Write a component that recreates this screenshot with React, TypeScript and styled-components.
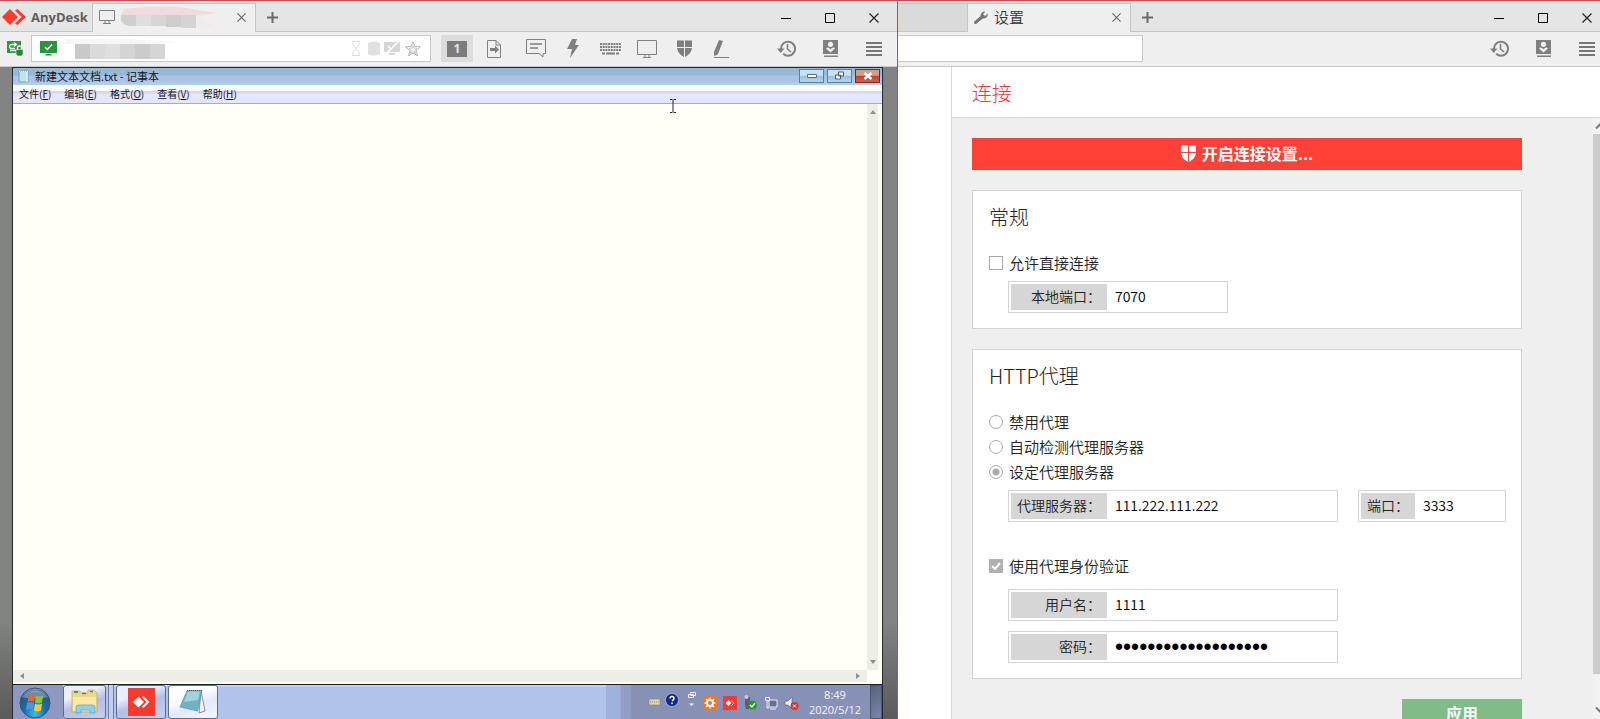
import React, { useState } from "react";
import styled, { createGlobalStyle, css } from "styled-components";

const UI_FONT = '"Noto Sans CJK SC", "Noto Sans", sans-serif';

const GlobalStyle = createGlobalStyle`
  *, *::before, *::after { box-sizing: border-box; }
  body { margin: 0; background: #efefef; font-family: ${UI_FONT}; color: #222; }
  button, input, textarea { font: inherit; color: inherit; margin: 0; }
  svg { display: block; flex: none; }
`;

/* ---------- Window frame ---------- */

const Screen = styled.main`
  display: grid;
  grid-template-columns: 898fr 702fr;
  height: 100vh;
  overflow: hidden;
  border-top: 1px solid #d04a4a;
`;

const Window = styled.section<{ $divided?: boolean }>`
  display: flex;
  flex-direction: column;
  min-width: 0;
  min-height: 0;
  background: #efefef;
  ${(p) => p.$divided && css`border-right: 1px solid #e03c3c;`}
`;

const TitleBar = styled.header<{ $end: number }>`
  display: flex;
  flex: none;
  height: 31px;
  padding: 2px ${(p) => p.$end}px 0 0;
  background: #e5e5e5;
  box-shadow: inset 0 -1px #c4c4c4;
`;

const Brand = styled.div`
  display: flex;
  align-items: center;
  gap: 5px;
  width: 92px;
  padding: 0 0 2px 2px;
  font: 700 13px/26px "Open Sans", sans-serif;
  color: #5e5e5e;
`;

const Tab = styled.div`
  display: flex;
  align-items: center;
  gap: 6px;
  width: 164px;
  padding: 0 5px 2px 6px;
  background: #efefef;
  border: 1px solid #c4c4c4;
  border-bottom: 0;
  font-size: 15px;
  font-weight: 350;
  line-height: 24px;
  color: #333;
`;

const HiddenTab = styled.div`
  width: 69px;
  background: #dadada;
  border: 1px solid #c4c4c4;
  border-width: 1px 0;
`;

const TabLabel = styled.span`
  flex: 1;
`;

const IconButton = styled.button<{ $width: number }>`
  display: flex;
  align-items: center;
  justify-content: center;
  flex: none;
  width: ${(p) => p.$width}px;
  padding: 0;
  border: 0;
  background: transparent;
`;

const Spacer = styled.div`
  flex: 1;
`;

const ButtonSet = styled.div`
  display: flex;
  gap: 18px;
`;

const ToolBar = styled.div<{ $start: number; $end: number }>`
  display: flex;
  align-items: stretch;
  flex: none;
  height: 35px;
  padding: 3px ${(p) => p.$end}px 4px ${(p) => p.$start}px;
  border-bottom: 1px solid #c8c8c8;
`;

const AddressBox = styled.div<{ $width: number; $open?: boolean }>`
  display: flex;
  align-items: center;
  gap: 5px;
  width: ${(p) => p.$width}px;
  padding: 0 9px 0 8px;
  background: #fff;
  border: 1px solid #c8c8c8;
  ${(p) => p.$open && css`border-left: 0;`}
`;

const AddressInput = styled.input`
  width: 100%;
  border: 0;
  outline: 0;
  background: transparent;
`;

const Tools = styled.div`
  display: flex;
  gap: 5px;
  padding-left: 10px;
`;

const ToolButton = styled(IconButton)<{ $active?: boolean; $after?: boolean }>`
  background: ${(p) => (p.$active ? "#dcdcdc" : "transparent")};
  margin-right: ${(p) => (p.$after ? 5 : 0)}px;
`;

const DisplayNumber = styled.span`
  width: 20px;
  height: 16px;
  background: #7c7c7c;
  color: #e4e4e4;
  font: 700 12px/16px "Open Sans", sans-serif;
`;

/* ---------- Remote desktop ---------- */

const Stage = styled.div`
  flex: 1;
  display: flex;
  min-height: 0;
  padding: 0 14px 0 12px;
  background: linear-gradient(#828282 0 85%, #5a5a5a 100%);
`;

const Desktop = styled.div`
  flex: 1;
  display: flex;
  flex-direction: column;
  min-width: 0;
  border: 1px solid #1e2c3a;
  border-bottom: 0;
  position: relative;
`;

const NotepadTitle = styled.div`
  display: flex;
  align-items: center;
  flex: none;
  gap: 3px;
  height: 17px;
  padding: 0 2px 1px 4px;
  background: linear-gradient(#98b9d6 0 40%, #abc4e6 50% 75%, #aed3e8);
  line-height: 16px;
  color: #10141c;
`;

const NotepadHeading = styled.h1`
  flex: 1;
  margin: 0 0 0 3px;
  font-size: 11px;
  font-weight: 400;
`;

const CaptionButton = styled.button<{ $close?: boolean }>`
  display: flex;
  align-items: center;
  justify-content: center;
  width: 25px;
  height: 14px;
  padding: 0;
  border: 1px solid ${(p) => (p.$close ? "#6e2c2c" : "#5c7ea4")};
  background: ${(p) =>
    p.$close
      ? "linear-gradient(#d99a8c 0 45%, #c23e2c 50%, #d0604c)"
      : "linear-gradient(#c8e0f2 0 45%, #98bfe0 50%, #b4d6ee)"};
`;

const MenuBar = styled.nav`
  display: flex;
  flex: none;
  gap: 13px;
  height: 19px;
  padding: 0 0 1px 6px;
  background: linear-gradient(#fdfdff 0 30%, #d4d6f2 35% 45%, #e6e6fb 50%);
  border-bottom: 1px solid #9fadc8;
`;

const MenuItem = styled.button`
  padding: 0;
  border: 0;
  background: transparent;
  font-size: 10px;
  line-height: 16px;
  color: #14141c;
`;

const Editor = styled.div`
  flex: 1;
  display: grid;
  grid-template: minmax(0, 1fr) 12px / minmax(0, 1fr) 11px;
  min-height: 0;
  padding: 0 4px 2px 0;
  background: #fffff6;
  border-bottom: 1px solid #17202c;
`;

const NotepadText = styled.textarea`
  width: 100%;
  height: 100%;
  padding: 4px;
  border: 0;
  outline: 0;
  resize: none;
  background: #fffff6;
`;

const NotepadScroll = styled.div<{ $vertical?: boolean }>`
  display: flex;
  flex-direction: ${(p) => (p.$vertical ? "column" : "row")};
  align-items: center;
  justify-content: space-between;
  padding: ${(p) => (p.$vertical ? "5px 0" : "0 6px")};
  background: #eeefe4;
`;

const TextCursor = styled.svg`
  position: absolute;
  left: 656px;
  top: 31px;
`;

const TaskBar = styled.footer`
  display: flex;
  flex: none;
  height: 34px;
  background: linear-gradient(#ffffff55, transparent 3px), #b1c3ec;
`;

const StartButton = styled.button`
  width: 50px;
  padding: 1px 0 0 6px;
  border: 0;
  background: #8d99c0;
`;

const TaskButton = styled.button<{ $width: number; $light?: boolean }>`
  display: flex;
  align-items: center;
  justify-content: center;
  width: ${(p) => p.$width}px;
  margin-right: 2px;
  padding: 0;
  border: 1px solid #5c6c90;
  border-radius: 3px;
  background: ${(p) =>
    p.$light
      ? "linear-gradient(160deg, #ffffff 0 35%, #e2e8f8 60%, #f4f7fd)"
      : "linear-gradient(160deg, #eceefa 0 30%, #b4bee2 55%, #c6d0ee)"};
`;

const TaskDivider = styled.div`
  width: 6px;
  margin-right: 2px;
  border: 1px solid #6f7fa6;
  border-width: 0 1px;
  background: #c4cdec;
`;

const Tray = styled.div`
  display: flex;
  align-items: center;
  gap: 4px;
  padding-left: 42px;
  background: linear-gradient(90deg, #a0b2dc 0 14px, #929ec6 15px 24px, #8791b5 26px);
`;

const Clock = styled.time`
  width: 62px;
  padding-bottom: 1px;
  font: 11px/15px "Open Sans", sans-serif;
  text-align: center;
  color: #f4f6fc;
`;

const ShowDesktop = styled.button`
  align-self: stretch;
  width: 12px;
  padding: 0;
  border: 1px solid #4c5474;
  background: linear-gradient(135deg, #56607e, #7c86ac);
`;

/* ---------- Settings ---------- */

const SettingsBody = styled.div`
  flex: 1;
  display: flex;
  min-height: 0;
`;

const Sidebar = styled.aside`
  flex: none;
  width: 54px;
  background: #fff;
  border-right: 1px solid #d6d6d6;
`;

const Settings = styled.div`
  flex: 1;
  display: flex;
  flex-direction: column;
  min-width: 0;
`;

const PageTitle = styled.h2`
  flex: none;
  margin: 0;
  padding: 0 20px;
  height: 51px;
  background: #fff;
  border-bottom: 1px solid #d6d6d6;
  font-size: 20px;
  font-weight: 300;
  line-height: 52px;
  color: #e23b3b;
`;

const ScrollArea = styled.div`
  flex: 1;
  display: flex;
  justify-content: space-between;
  min-height: 0;
  overflow: hidden;
`;

const Form = styled.form`
  flex: 1;
  display: flex;
  flex-direction: column;
  gap: 20px;
  max-width: 590px;
  padding: 20px;
`;

const Unlock = styled.button`
  display: flex;
  align-items: center;
  justify-content: center;
  gap: 6px;
  flex: none;
  height: 32px;
  padding: 0 0 1px;
  border: 0;
  background: #ff4137;
  color: #fff;
  font-size: 16px;
  font-weight: 700;
  line-height: 28px;
`;

const UnlockText = styled.span`
  padding-bottom: 1px;
`;

const Card = styled.section`
  flex: none;
  padding: 10px 15px 15px 16px;
  background: #fff;
  border: 1px solid #d4d4d4;
`;

const CardTitle = styled.h3`
  margin: 0 0 18px;
  font-size: 20px;
  font-weight: 300;
  line-height: 32px;
  color: #222;
`;

const Option = styled.label`
  display: flex;
  align-items: center;
  gap: 6px;
  height: 25px;
  padding-bottom: 1px;
  font-size: 15px;
  font-weight: 350;
  line-height: 24px;
`;

const Mark = styled.input`
  appearance: none;
  flex: none;
  width: 14px;
  height: 14px;
  border: 1px solid #a8a8a8;
  background: #fff center / 100% no-repeat;

  &[type="radio"] { border-radius: 50%; }
  &[type="radio"]:checked { background: radial-gradient(circle, #acacac 0 3px, #fff 4px); }
  &[type="checkbox"]:checked {
    border-color: #b0b0b0;
    background-color: #b0b0b0;
    background-image: url('data:image/svg+xml,<svg xmlns="http://www.w3.org/2000/svg" viewBox="0 0 12 12"><path d="M2 6l3 3 5-6" fill="none" stroke="white" stroke-width="2"/></svg>');
  }
`;

const Row = styled.div<{ $top: number }>`
  display: flex;
  gap: 20px;
  margin-top: ${(p) => p.$top}px;
  padding-left: 19px;
`;

const FieldBox = styled.div<{ $width: number }>`
  display: flex;
  width: ${(p) => p.$width}px;
  height: 32px;
  padding: 2px;
  border: 1px solid #d4d4d4;
`;

const FieldLabel = styled.label<{ $width: number }>`
  flex: none;
  width: ${(p) => p.$width}px;
  padding-right: 6px;
  background: #d6d6d6;
  font-size: 14px;
  font-weight: 350;
  line-height: 24px;
  text-align: right;
`;

const FieldInput = styled.input`
  flex: 1;
  min-width: 0;
  padding: 0 8px 2px;
  border: 0;
  outline: 0;
  font-size: 14px;
  font-weight: 350;
  color: #000;

  &[type="password"] { padding-bottom: 0; font: 23px/26px "Liberation Sans", sans-serif; }
`;

const AuthGroup = styled.div`
  margin-top: 32px;
`;

const Apply = styled.button`
  align-self: flex-end;
  flex: none;
  width: 120px;
  height: 32px;
  padding: 0 0 4px;
  border: 0;
  background: #80bb88;
  color: #fff;
  font-size: 16px;
  font-weight: 700;
  line-height: 28px;
`;

const ScrollTrack = styled.div`
  display: flex;
  flex-direction: column;
  flex: none;
  width: 7px;
  overflow: hidden;
  background: #f2f2f2;
`;

const ScrollArrow = styled.div<{ $up?: boolean }>`
  flex: none;
  height: ${(p) => (p.$up ? 16 : 45)}px;
  padding-top: ${(p) => (p.$up ? 4 : 33)}px;
  padding-left: 2px;
`;

const ScrollThumb = styled.div`
  flex: 1;
  background: #cbcbcb;
`;

/* ---------- Drawings ---------- */

const g = "#7f7f7f";

const Logo = () => (
  <svg width="24" height="16" viewBox="0 0 24 16" fill="#ff3b30">
    <path d="M8 0l8 8-8 8-8-8z" />
    <path d="M13 1.500L15.500 0 24 8l-8.500 8L13 14.500 19.500 8z" />
  </svg>
);

const Monitor = ({ w, h }: { w: number; h: number }) => (
  <svg width={w} height={h} viewBox={`0 0 ${w} ${h}`} fill="none" stroke={g}>
    <path d={`M.5.5h${w - 1}v${h - 4}h-${w - 1}zM${w / 2 - 4} ${h - 0.5}h8M${w / 2 - 2} ${h - 3}v2M${w / 2 + 2} ${h - 3}v2`} />
  </svg>
);

const Cross = ({ s, color = "#666" }: { s: number; color?: string }) => (
  <svg width={s} height={s} viewBox="0 0 10 10" stroke={color} strokeWidth="1.200">
    <path d="M.5.5l9 9M9.500.5l-9 9" />
  </svg>
);

const Plus = () => (
  <svg width="11" height="11" viewBox="0 0 11 11" stroke="#6a6a6a" strokeWidth="2">
    <path d="M5.500 0v11M0 5.500h11" />
  </svg>
);

const Minimize = () => (
  <svg width="10" height="10" viewBox="0 0 10 10"><path d="M0 5h10v1H0z" fill="#000" /></svg>
);
const Maximize = () => (
  <svg width="10" height="10" viewBox="0 0 10 10"><path d="M.5.5h9v9h-9z" fill="none" stroke="#000" /></svg>
);

const Shield = ({ color = g }) => (
  <svg width="15" height="17" viewBox="0 0 15 17" fill={color}>
    <path d="M0 .5h7V7H0zM8 .5h7V7H8zM0 8h7v9C3 15 .5 12 0 8zM8 8h7c-.5 4-3 7-7 9z" />
  </svg>
);

const History = () => (
  <svg width="19" height="17" viewBox="0 0 19 17" fill="none" stroke={g} strokeWidth="2">
    <path d="M4 9a7 7 0 1 1 2.200 4.800" />
    <path d="M0 8.500h7.500L3.700 13z" fill={g} stroke="none" />
    <path d="M10.500 4v5l3.500 3" strokeWidth="1.600" />
  </svg>
);

const Contacts = () => (
  <svg width="15" height="17" viewBox="0 0 15 17">
    <path d="M0 0h15v14H0zM1 15.500h14V17H1z" fill={g} />
    <circle cx="7.500" cy="4.300" r="2.600" fill="#efefef" />
    <path d="M3 8.500q1.500-1.500 3-.5l1.500 1.300L9 8q1.500-1 3 .5L7.500 12.500z" fill="#efefef" />
  </svg>
);

const Menu = () => (
  <svg width="16" height="14" viewBox="0 0 16 14" fill="#777">
    <path d="M0 0h16v2H0zM0 4h16v2H0zM0 8h16v2H0zM0 12h16v2H0z" />
  </svg>
);

const SecureLink = () => (
  <svg width="16" height="15" viewBox="0 0 16 15">
    <path d="M0 0h14v12H0z" fill="#2f9540" />
    <path d="M9 3.500H4.500a2 2 0 0 0 0 4H8M7 1.500l2.500 2L7 5.500M9 9.500H3" fill="none" stroke="#eef6ee" strokeWidth="1.300" />
    <path d="M9 8.500h7V13l-1.500 2h-4L9 13z" fill="#23872f" stroke="#efefef" strokeWidth=".6" />
    <path d="M10.500 8.500V7a2 2 0 0 1 4 0v1.500" fill="none" stroke="#efefef" strokeWidth="1.400" />
  </svg>
);

const Verified = () => (
  <svg width="17" height="15" viewBox="0 0 17 15">
    <path d="M0 0h17v12H0zM6 13h5l1 1.500H5z" fill="#2a9438" />
    <path d="M5 6l2.500 2.500L12 3.500" fill="none" stroke="#fff" strokeWidth="1.500" />
  </svg>
);

const TabMosaic = () => (
  <svg width="96" height="24" viewBox="0 0 96 24">
    <path d="M4 5Q30 0 60 3L96 9 78 10 96 24 75 21z" fill="#f1ebeb" />
    <path d="M3 4Q40 0 65 3L96 8 75 10H0z" fill="#f1dada" />
    <path d="M0 10h15v11H9Q1 20 0 15z" fill="#cfcfcf" />
    <path d="M15 10h15v11H15z" fill="#dedede" />
    <path d="M30 10h15v11H30z" fill="#d6d6d6" />
    <path d="M45 10h15v12H45z" fill="#cdcdcd" />
    <path d="M60 10h15v13H60z" fill="#d4d4d4" />
  </svg>
);

const AddressMosaic = () => (
  <svg width="114" height="22" viewBox="0 0 114 22">
    <path d="M3 1Q60-1 114 4L102 6H3z" fill="#f6f6f6" />
    <path d="M13 6h15v15H13z" fill="#c9c9c9" />
    <path d="M28 6h15v15H28z" fill="#dadada" />
    <path d="M43 6h15v15H43z" fill="#e0dfe0" />
    <path d="M58 6h15v15H58z" fill="#d4d4d4" />
    <path d="M73 6h15v15H73z" fill="#cbcbcb" />
    <path d="M88 6h15v15H88z" fill="#d5d5d5" />
  </svg>
);

const AddressIcons = () => (
  <svg width="70" height="16" viewBox="0 0 70 16">
    <path d="M1 .5h8M1 14.500h8M2 1v3l3 3.500L8 4V1M2 14v-3l3-3.500L8 11v3" fill="none" stroke="#dcdcdc" />
    <path d="M17 2q6-3 12 0v11q-6 3-12 0z" fill="#e0e0e0" />
    <path d="M33 1h16v10H33zM38 12h6v2h-6z" fill="#d6d6d6" />
    <path d="M35 13L47 1M37 5l3 3 5-5" stroke="#fff" fill="none" strokeWidth="1.500" />
    <path d="M62 .8l2 4.700 5.300.4-4 3.500 1.200 5.500-4.500-3-4.500 3 1.200-5.500-4-3.500 5.300-.4z" fill="none" stroke="#a0a0a0" strokeWidth=".8" />
    <path d="M62 4.500l1 2.500 3 .3-2.200 2 .7 3L62 10.800l-2.500 1.500.7-3-2.200-2 3-.3z" fill="none" stroke="#a8a8a8" strokeWidth=".7" />
  </svg>
);

const SendFile = () => (
  <svg width="14" height="18" viewBox="0 0 14 18" fill="none" stroke={g}>
    <path d="M.5.5H9L13.500 5v12.500H.5zM9 .5V5h4.500" />
    <path d="M3 8h5V5.500L12 9.500l-4 4V11H3z" fill={g} stroke="none" />
  </svg>
);

const Chat = () => (
  <svg width="20" height="19" viewBox="0 0 20 19" fill="none" stroke={g}>
    <path d="M.5.5h19v14H17v3.500l-4-3.500H.5z" />
    <path d="M4 5h12M4 9h8" strokeWidth="1.400" />
  </svg>
);

const Bolt = () => (
  <svg width="12" height="19" viewBox="0 0 12 19" fill={g}>
    <path d="M5 0h5L8 6h4L3 19l2-9H0z" />
  </svg>
);

const Keyboard = () => (
  <svg width="21" height="12" viewBox="0 0 21 12" stroke={g} strokeWidth="2">
    <path d="M0 1h21M0 4h21M0 7h21" strokeDasharray="2 .7" />
    <path d="M2 10.500h3m1 0h9m1 0h3" />
  </svg>
);

const Pen = () => (
  <svg width="16" height="18" viewBox="0 0 16 18" fill={g}>
    <path d="M6 0l4 1-5 13-3 2-1-.5L1 12zM1 17h15v1H1z" />
  </svg>
);

const Wrench = () => (
  <svg width="14" height="13" viewBox="0 0 14 13">
    <path d="M1.500 11.500L8 6" stroke="#757575" strokeWidth="3" strokeLinecap="round" />
    <path d="M7 6.500C5.500 3 8 0 11.500.5L9.300 2.700l.5 1.600 1.700.4L13.700 2.500C14.500 6 11 9 7 6.500z" fill="#757575" />
  </svg>
);

const Triangle = ({ d }: { d: string }) => (
  <svg width="6" height="6" viewBox="0 0 6 6"><path d={d} fill="#8a8f96" /></svg>
);

const NotepadIcon = () => (
  <svg width="12" height="13" viewBox="0 0 12 13">
    <path d="M2 1h9v11H2z" fill="#bfe3ea" stroke="#6fa3b4" />
    <path d="M10 2v10" stroke="#fff" /><path d="M2 1.500h9" stroke="#e8f4f6" strokeDasharray="1 1" />
  </svg>
);

const Orb = () => (
  <svg width="32" height="32" viewBox="0 0 32 32">
    <defs>
      <radialGradient id="orb" cx=".5" cy=".85" r=".9">
        <stop offset="0" stopColor="#38c4ee" /><stop offset=".4" stopColor="#176fb0" />
        <stop offset=".75" stopColor="#2d5680" /><stop offset="1" stopColor="#a9bdd0" />
      </radialGradient>
    </defs>
    <circle cx="16" cy="16" r="15" fill="url(#orb)" stroke="#3a5378" />
    <path d="M3 10Q16-3 29 10q-13 3-26 0z" fill="#fff" opacity=".3" />
    <path d="M10 8q3-2 6 0l-1 7q-3-2-6.500 0z" fill="#ec6430" />
    <path d="M17 8.500q3 2 7 0l-1 7q-4 2-7 0z" fill="#8cc63e" />
    <path d="M8 16q4-2 7 0l-1 7q-3-2-7 0z" fill="#3e9be0" />
    <path d="M16 16.500q3 2 7 0l-1 7q-4 2-7 0z" fill="#fccb38" />
  </svg>
);

const Folder = () => (
  <svg width="28" height="26" viewBox="0 0 28 26">
    <path d="M1 2h8l2 2h6V1h6l3 3v19H1z" fill="#ecd88c" stroke="#c4aa60" strokeWidth=".7" />
    <path d="M2 8h23v14H2z" fill="#f8eaa4" />
    <path d="M3 3h4" stroke="#4a9a4a" strokeWidth="2" /><path d="M11 4.500h4" stroke="#c05040" strokeWidth="1.500" /><path d="M19 2.500h3" stroke="#4a80c0" strokeWidth="1.500" />
    <path d="M5 18q0-2 3-2h13q3 0 3 2v6h-5v-3h-9v3H5z" fill="#8fd0ee" stroke="#5aa0cc" strokeWidth=".7" />
  </svg>
);

const NotepadLarge = () => (
  <svg width="28" height="26" viewBox="0 0 28 26">
    <path d="M22 2l4 20-6 2z" fill="#f4f4f4" stroke="#777" strokeWidth=".8" />
    <path d="M8 1.500h15L18.500 22 1 18z" fill="#6fb2c4" stroke="#50889a" strokeWidth=".6" />
    <path d="M9 2.500h12L19 11 5 13z" fill="#b8dfe8" opacity=".7" />
    <path d="M8 1.500h15" stroke="#555" strokeDasharray="1 1" />
  </svg>
);

const DeskTile = () => (
  <svg width="27" height="28" viewBox="0 0 27 28">
    <path d="M0 0h27v28H0z" fill="#f93a30" />
    <path d="M10.500 8.500L16 14l-5.500 5.500L5 14zM14 9.500l1.500-1.500 6 6-6 6-1.500-1.500 4.500-4.500z" fill="#fff" />
  </svg>
);

const TrayIcons = () => (
  <svg width="152" height="26" viewBox="0 0 152 26">
    <path d="M1 10h11v6H1z" fill="#d9d6b0" stroke="#8a8a78" strokeWidth=".6" /><path d="M2 13h9" stroke="#8a8a78" strokeDasharray="1 1" />
    <circle cx="24" cy="11" r="6.500" fill="#15268c" stroke="#cfd6ee" strokeWidth=".6" />
    <path d="M22 9.500q0-2 2-2t2 2q0 1-2 2.500M24 13.500v1.500" fill="none" stroke="#fff" strokeWidth="1.500" />
    <path d="M42.500 3.500h5v3h-5zM40.500 5.500h5v3h-5z" fill="#8791b5" stroke="#eef" />
    <path d="M41 14.500h5l-2.500 2.500z" fill="#fff" />
    <path d="M55 7h14v14H55z" fill="#f0762c" /><circle cx="62" cy="14" r="3" fill="none" stroke="#fff" strokeWidth="1.800" />
    <path d="M62 8.500v2M62 17.500v2M56.500 14h2M65.500 14h2M58 10l1.500 1.500M64.500 16.500L66 18M66 10l-1.500 1.500M59.500 16.500L58 18" stroke="#fff" strokeWidth="1.300" />
    <path d="M75 7h14v14H75z" fill="#f93a30" /><path d="M80.500 11l3 3-3 3-3-3z" fill="#fff" /><path d="M83.500 11.500L86 14l-2.500 2.500" fill="none" stroke="#fff" />
    <path d="M97 8h5v8l-1 4h-3l-1-4z" fill="#58606c" /><circle cx="98.500" cy="8" r="2" fill="#c8cce0" />
    <circle cx="104.500" cy="16" r="4.500" fill="#27962e" /><path d="M102 16l2 2 3-4" fill="none" stroke="#fff" strokeWidth="1.400" />
    <path d="M121 11h8v7h-8zM122 20h6" fill="#65708c" stroke="#eef" /><path d="M117.500 8.500h4v3h-4zM119 12v7h2" fill="none" stroke="#eef" />
    <path d="M137 12h3l4-4v12l-4-4h-3z" fill="#eef" stroke="#555" strokeWidth=".6" />
    <circle cx="146.500" cy="17" r="4" fill="#cf3a34" /><path d="M145 15.500l3 3M148 15.500l-3 3" stroke="#fff" />
  </svg>
);

/* ---------- Composed parts ---------- */

const WindowControls = () => (
  <ButtonSet>
    <IconButton $width={26} aria-label="最小化"><Minimize /></IconButton>
    <IconButton $width={26} aria-label="最大化"><Maximize /></IconButton>
    <IconButton $width={26} aria-label="关闭"><Cross s={10} color="#222" /></IconButton>
  </ButtonSet>
);

const GlobalTools = () => (
  <ButtonSet>
    <IconButton $width={26} aria-label="历史"><History /></IconButton>
    <IconButton $width={26} aria-label="联系人"><Contacts /></IconButton>
    <IconButton $width={26} aria-label="菜单"><Menu /></IconButton>
  </ButtonSet>
);

type FieldProps = {
  id: string;
  label: string;
  value: string;
  width: number;
  labelWidth?: number;
  type?: string;
};

const Field = ({ id, label, value, width, labelWidth = 96, type = "text" }: FieldProps) => (
  <FieldBox $width={width}>
    <FieldLabel htmlFor={id} $width={labelWidth}>{label}</FieldLabel>
    <FieldInput id={id} type={type} defaultValue={value} autoComplete="off" />
  </FieldBox>
);

const menus = [["文件", "F"], ["编辑", "E"], ["格式", "O"], ["查看", "V"], ["帮助", "H"]];
const proxyModes = ["禁用代理", "自动检测代理服务器", "设定代理服务器"];

const RemoteWindow = () => (
  <Window $divided>
    <TitleBar $end={10}>
      <Brand><Logo />AnyDesk</Brand>
      <Tab>
        <Monitor w={16} h={14} />
        <TabLabel><TabMosaic /></TabLabel>
        <IconButton $width={18} aria-label="关闭标签页"><Cross s={9} /></IconButton>
      </Tab>
      <IconButton $width={32} aria-label="新建标签页"><Plus /></IconButton>
      <Spacer />
      <WindowControls />
    </TitleBar>
    <ToolBar $start={7} $end={10}>
      <ButtonSetLead>
        <IconButton $width={16} aria-label="安全连接"><SecureLink /></IconButton>
        <AddressBox $width={400}>
          <Verified />
          <AddressMosaic />
          <Spacer />
          <AddressIcons />
        </AddressBox>
      </ButtonSetLead>
      <Tools>
        <ToolButton $width={32} $active aria-label="显示器 1"><DisplayNumber>1</DisplayNumber></ToolButton>
        <ToolButton $width={32} $after aria-label="传输文件"><SendFile /></ToolButton>
        <ToolButton $width={32} aria-label="聊天"><Chat /></ToolButton>
        <ToolButton $width={32} aria-label="操作"><Bolt /></ToolButton>
        <ToolButton $width={32} aria-label="键盘"><Keyboard /></ToolButton>
        <ToolButton $width={32} aria-label="显示"><Monitor w={20} h={18} /></ToolButton>
        <ToolButton $width={32} aria-label="权限"><Shield /></ToolButton>
        <ToolButton $width={32} aria-label="白板"><Pen /></ToolButton>
      </Tools>
      <Spacer />
      <GlobalTools />
    </ToolBar>
    <Stage>
      <Desktop>
        <NotepadTitle>
          <NotepadIcon />
          <NotepadHeading>新建文本文档.txt - 记事本</NotepadHeading>
          <CaptionButton aria-label="最小化">
            <svg width="10" height="6" viewBox="0 0 10 6"><path d="M.5 1.500h9v3h-9z" fill="#fff" stroke="#5a6a80" /></svg>
          </CaptionButton>
          <CaptionButton aria-label="还原">
            <svg width="11" height="10" viewBox="0 0 11 10"><path d="M4.500 1h5v4h-5zM1.500 4h5v4h-5z" fill="#fff" stroke="#4a5a78" /></svg>
          </CaptionButton>
          <CaptionButton $close aria-label="关闭">
            <svg width="10" height="8" viewBox="0 0 10 8"><path d="M1.500 1l7 6M8.500 1l-7 6" stroke="#fff" strokeWidth="2.400" /></svg>
          </CaptionButton>
        </NotepadTitle>
        <MenuBar>
          {menus.map(([name, key]) => (
            <MenuItem key={key}>{name}(<u>{key}</u>)</MenuItem>
          ))}
        </MenuBar>
        <Editor>
          <NotepadText aria-label="文本" />
          <NotepadScroll $vertical>
            <Triangle d="M0 5l3-4 3 4z" />
            <Triangle d="M0 1l3 4 3-4z" />
          </NotepadScroll>
          <NotepadScroll>
            <Triangle d="M5 0L1 3l4 3z" />
            <Triangle d="M1 0l4 3-4 3z" />
          </NotepadScroll>
        </Editor>
        <TaskBar>
          <StartButton aria-label="开始"><Orb /></StartButton>
          <TaskButton $width={43} aria-label="资源管理器"><Folder /></TaskButton>
          <TaskDivider />
          <TaskButton $width={50} aria-label="AnyDesk"><DeskTile /></TaskButton>
          <TaskButton $width={50} $light aria-label="记事本"><NotepadLarge /></TaskButton>
          <Spacer />
          <Tray>
            <TrayIcons />
            <Clock dateTime="2020-05-12T08:49">8:49<br />2020/5/12</Clock>
            <ShowDesktop aria-label="显示桌面" />
          </Tray>
        </TaskBar>
        <TextCursor width="8" height="14" viewBox="0 0 8 14" fill="none" stroke="#222">
          <path d="M1 .5h2.500M4.500.5H7M1 13.500h2.500M4.500 13.500H7M4 1v12" />
        </TextCursor>
      </Desktop>
    </Stage>
  </Window>
);

const ButtonSetLead = styled.div`
  display: flex;
  gap: 8px;
`;

const SettingsWindow = () => {
  const [mode, setMode] = useState(2);
  return (
    <Window>
      <TitleBar $end={0}>
        <HiddenTab />
        <Tab>
          <Wrench />
          <TabLabel>设置</TabLabel>
          <IconButton $width={18} aria-label="关闭标签页"><Cross s={9} /></IconButton>
        </Tab>
        <IconButton $width={32} aria-label="新建标签页"><Plus /></IconButton>
        <Spacer />
        <WindowControls />
      </TitleBar>
      <ToolBar $start={0} $end={0}>
        <AddressBox $width={245} $open><AddressInput aria-label="远程地址" /></AddressBox>
        <Spacer />
        <GlobalTools />
      </ToolBar>
      <SettingsBody>
        <Sidebar />
        <Settings>
          <PageTitle>连接</PageTitle>
          <ScrollArea>
            <Form onSubmit={(e) => e.preventDefault()}>
              <Unlock type="button">
                <Shield color="#fff" />
                <UnlockText>开启连接设置...</UnlockText>
              </Unlock>
              <Card>
                <CardTitle>常规</CardTitle>
                <Option><Mark type="checkbox" />允许直接连接</Option>
                <Row $top={5}>
                  <Field id="local-port" label="本地端口：" value="7070" width={220} />
                </Row>
              </Card>
              <Card>
                <CardTitle>HTTP代理</CardTitle>
                {proxyModes.map((name, i) => (
                  <Option key={name}>
                    <Mark type="radio" name="proxy" checked={mode === i} onChange={() => setMode(i)} />
                    {name}
                  </Option>
                ))}
                <Row $top={5}>
                  <Field id="proxy-host" label="代理服务器：" value="111.222.111.222" width={330} />
                  <Field id="proxy-port" label="端口：" value="3333" width={148} labelWidth={54} />
                </Row>
                <AuthGroup>
                  <Option><Mark type="checkbox" defaultChecked />使用代理身份验证</Option>
                  <Row $top={10}>
                    <Field id="user" label="用户名：" value="1111" width={330} />
                  </Row>
                  <Row $top={10}>
                    <Field id="password" label="密码：" value="abcdefghijklmnopqrs" width={330} type="password" />
                  </Row>
                </AuthGroup>
              </Card>
              <Apply>应用</Apply>
            </Form>
            <ScrollTrack aria-hidden="true">
              <ScrollArrow $up>
                <svg width="12" height="7" viewBox="0 0 12 7"><path d="M1 6.500l5-5 5 5" fill="none" stroke="#777" strokeWidth="2" /></svg>
              </ScrollArrow>
              <ScrollThumb />
              <ScrollArrow>
                <svg width="12" height="7" viewBox="0 0 12 7"><path d="M1 .5l5 5 5-5" fill="none" stroke="#777" strokeWidth="2" /></svg>
              </ScrollArrow>
            </ScrollTrack>
          </ScrollArea>
        </Settings>
      </SettingsBody>
    </Window>
  );
};

export default function App() {
  return (
    <>
      <GlobalStyle />
      <Screen>
        <RemoteWindow />
        <SettingsWindow />
      </Screen>
    </>
  );
}
